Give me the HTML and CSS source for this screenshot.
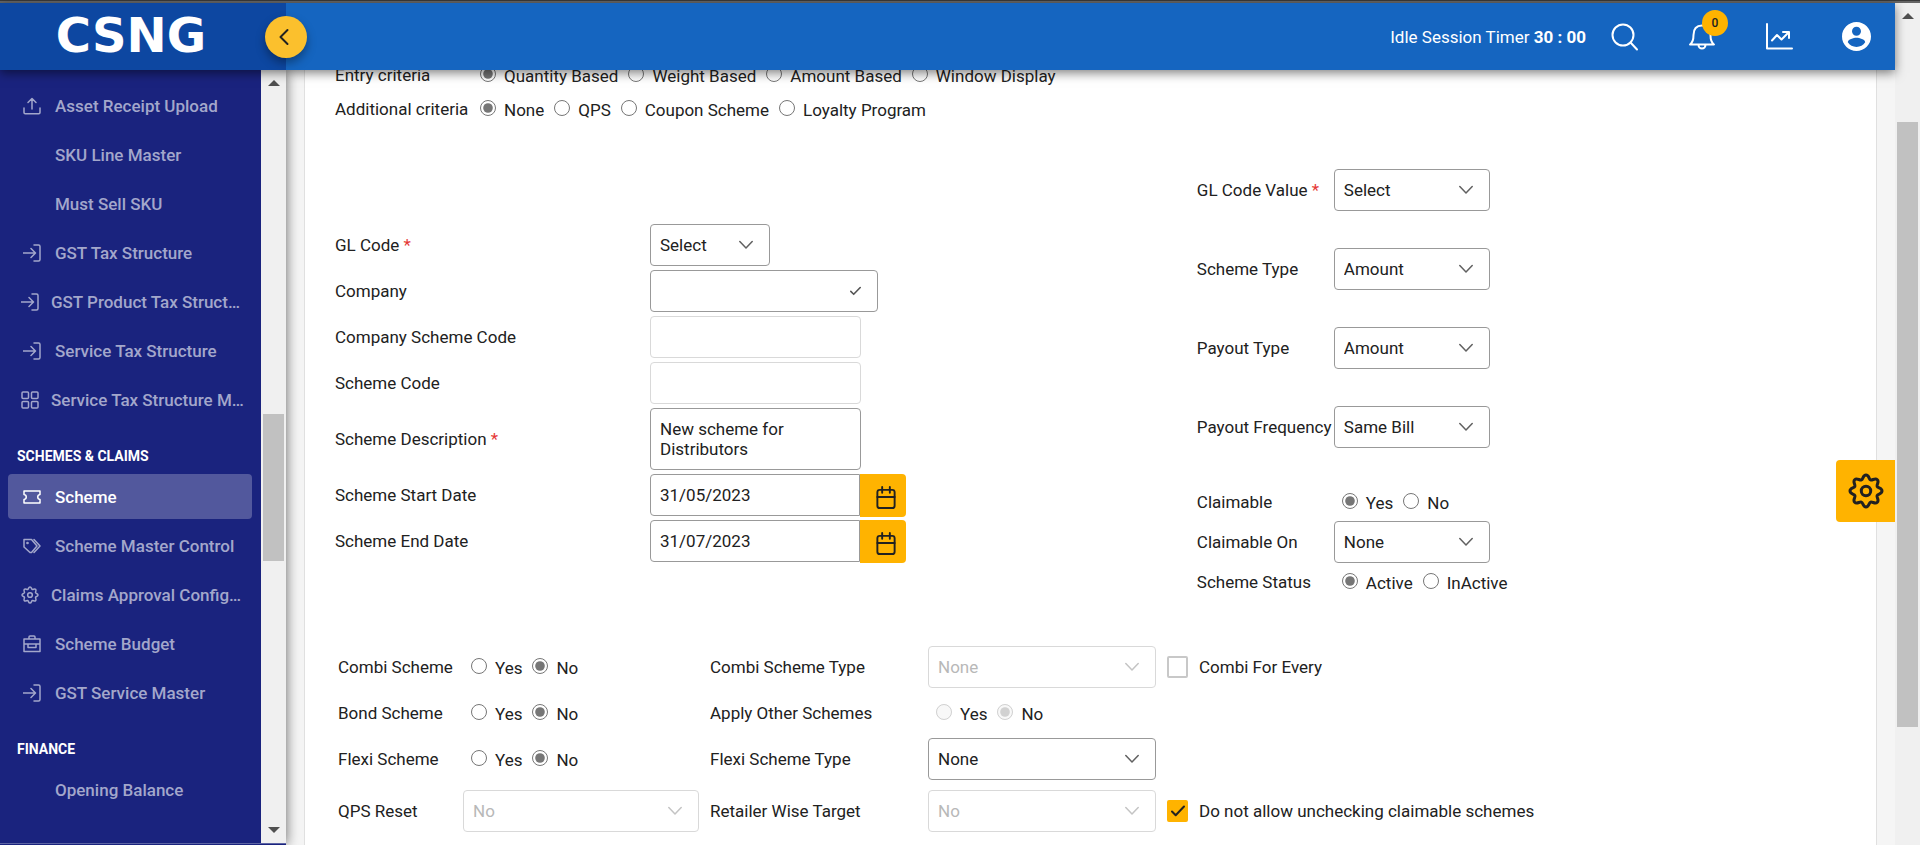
FILE: index.html
```
<!DOCTYPE html>
<html lang="en">
<head>
<meta charset="utf-8">
<title>CSNG - Scheme</title>
<link rel="stylesheet" href="styles.css">
</head>
<body>
<svg class="sprite" aria-hidden="true">
  <symbol id="i-upload" viewBox="0 0 18 18"><path d="M9 12V2M5 5.500L9 1.500l4 4M1 11v4.500a1.200 1.200 0 0 0 1.200 1.200h13.600a1.200 1.200 0 0 0 1.200-1.200V11"/></symbol>
  <symbol id="i-in" viewBox="0 0 18 18"><path d="M0 9h12M8 4.500L12.500 9 8 13.500M11 1h4.500A1.500 1.500 0 0 1 17 2.500v13a1.500 1.500 0 0 1-1.500 1.500H11"/></symbol>
  <symbol id="i-grid" viewBox="0 0 18 18"><rect x="1" y="1" width="6.500" height="6.500" rx="1"/><rect x="10.500" y="1" width="6.500" height="6.500" rx="1"/><rect x="1" y="10.500" width="6.500" height="6.500" rx="1"/><rect x="10.500" y="10.500" width="6.500" height="6.500" rx="1"/></symbol>
  <symbol id="i-ticket" viewBox="0 0 18 18"><path d="M1 3h16v3.500c-3 .5-3 4.500 0 5V15H1v-3.500c3-.5 3-4.500 0-5z"/></symbol>
  <symbol id="i-tags" viewBox="0 0 18 18"><path d="M1 2.500h7.500l5.500 6.500-5.500 6.500H7L1 10zM11 2.500l6 6.500-6 6.500"/><circle cx="4.500" cy="6" r=".6"/></symbol>
  <symbol id="i-cog" viewBox="0 0 36 36"><path d="M18 2C21.200 2 20.740 6.140 22.590 6.910S27.050 4.430 29.310 6.690 28.320 11.560 29.090 13.410 34 14.800 34 18 29.860 20.740 29.090 22.590 31.570 27.050 29.310 29.310 24.440 28.320 22.590 29.090 21.200 34 18 34 15.260 29.860 13.410 29.090 8.950 31.570 6.690 29.310 7.680 24.440 6.910 22.590 2 21.200 2 18 6.140 15.260 6.910 13.410 4.430 8.950 6.690 6.690 11.560 7.680 13.410 6.910 14.800 2 18 2z"/><circle cx="18" cy="18" r="4.700"/></symbol>
  <symbol id="i-case" viewBox="0 0 18 18"><path d="M1 4h16v12.500H1zM6 4V2q0-1 1-1h4q1 0 1 1v2M1 9h16M5 9v3.500h8V9"/></symbol>
  <symbol id="i-cal" viewBox="0 0 20 24"><rect x="1" y="4" width="18" height="19" rx="2.500"/><path d="M1 11.500h18M6 1v6M14 1v6"/></symbol>
  <symbol id="i-down" viewBox="0 0 14 10"><path d="M.8 1.500L7 8l6.200-6.500"/></symbol>
  <symbol id="i-check" viewBox="0 0 14 12"><path d="M1 6.500l3.700 3.700L13 1.500"/></symbol>
</svg>

<div class="app">
  <div class="strip"></div>
  <div class="window">
    <div class="viewport">
      <header class="topbar">
        <div class="brand"><span class="wordmark">CSNG</span></div>
        <button class="collapse" type="button" aria-label="Collapse menu"><svg width="12" height="18" viewBox="0 0 12 18"><path d="M9.500 2L2.500 9l7 7"/></svg></button>
        <div class="tools">
          <div class="timer">Idle Session Timer <b>30 : 00</b></div>
          <button class="tool" type="button" aria-label="Search"><svg width="28" height="28" viewBox="0 0 28 28"><circle cx="12" cy="12" r="10.500"/><path d="M19.500 19.500l6.500 7"/></svg></button>
          <button class="tool" type="button" aria-label="Notifications"><svg width="28" height="28" viewBox="0 0 28 28"><path d="M2 21.500c3-2 3.500-5 3.500-9.500C5.500 6 8.500 2.500 14 2.500S22.500 6 22.500 12c0 4.500.5 7.500 3.500 9.500zM10.500 22a3.500 3.500 0 0 0 7 0"/></svg><span class="badge">0</span></button>
          <button class="tool" type="button" aria-label="Reports"><svg width="28" height="28" viewBox="0 0 28 28"><path d="M2 1v24.500h25M7 17.500l5-5.500 4.500 4.500 7-7M18 9h6v6"/></svg></button>
          <button class="tool" type="button" aria-label="Account"><svg width="29" height="29" viewBox="2 2 20 20"><path class="solid" d="M12 2C6.480 2 2 6.480 2 12s4.480 10 10 10 10-4.480 10-10S17.520 2 12 2zm0 3.300c1.700 0 3.100 1.400 3.100 3.100s-1.400 3.100-3.100 3.100-3.100-1.400-3.100-3.100S10.300 5.300 12 5.300zm0 13.900c-2.500 0-4.700-1.280-6-3.220.03-1.990 4-3.080 6-3.080 1.990 0 5.970 1.090 6 3.080-1.290 1.940-3.500 3.220-6 3.220z"/></svg></button>
        </div>
      </header>

      <div class="body">
        <aside class="sidebar">
          <div class="side-main">
            <nav class="menu">
              <a class="item" href="#"><svg><use href="#i-upload"/></svg>Asset Receipt Upload</a>
              <a class="item" href="#"><svg></svg>SKU Line Master</a>
              <a class="item" href="#"><svg></svg>Must Sell SKU</a>
              <a class="item" href="#"><svg><use href="#i-in"/></svg>GST Tax Structure</a>
              <a class="item long" href="#"><svg><use href="#i-in"/></svg>GST Product Tax Struct…</a>
              <a class="item" href="#"><svg><use href="#i-in"/></svg>Service Tax Structure</a>
              <a class="item long" href="#"><svg><use href="#i-grid"/></svg>Service Tax Structure M…</a>
              <h2>SCHEMES &amp; CLAIMS</h2>
              <a class="item active" href="#"><svg><use href="#i-ticket"/></svg>Scheme</a>
              <a class="item" href="#"><svg><use href="#i-tags"/></svg>Scheme Master Control</a>
              <a class="item long cog" href="#"><svg><use href="#i-cog"/></svg>Claims Approval Config…</a>
              <a class="item" href="#"><svg><use href="#i-case"/></svg>Scheme Budget</a>
              <a class="item" href="#"><svg><use href="#i-in"/></svg>GST Service Master</a>
              <h2>FINANCE</h2>
              <a class="item" href="#"><svg></svg>Opening Balance</a>
            </nav>
            <div class="track side-track"><i class="arrow up"></i><i class="space before"></i><i class="thumb"></i><i class="space after"></i><i class="arrow dn"></i></div>
          </div>
          <div class="side-foot"></div>
        </aside>

        <main class="content">
          <form class="card">
            <div class="criteria">
              <span class="lbl">Entry criteria</span>
              <div class="radios">
                <label><input type="radio" name="entry" checked>Quantity Based</label>
                <label><input type="radio" name="entry">Weight Based</label>
                <label><input type="radio" name="entry">Amount Based</label>
                <label><input type="radio" name="entry">Window Display</label>
              </div>
              <span class="lbl">Additional criteria</span>
              <div class="radios">
                <label><input type="radio" name="addl" checked>None</label>
                <label><input type="radio" name="addl">QPS</label>
                <label><input type="radio" name="addl">Coupon Scheme</label>
                <label><input type="radio" name="addl">Loyalty Program</label>
              </div>
            </div>

            <div class="halves">
              <div class="left">
                <label for="gl">GL Code <em>*</em></label>
                <div class="field w-s"><select id="gl"><option>Select</option></select><svg class="chev"><use href="#i-down"/></svg></div>
                <label for="co">Company</label>
                <div class="field w-l"><input id="co" type="text"><svg class="tick"><use href="#i-check"/></svg></div>
                <label for="csc">Company Scheme Code</label>
                <div class="field w-m"><input id="csc" type="text" disabled></div>
                <label for="sc">Scheme Code</label>
                <div class="field w-m"><input id="sc" type="text" disabled></div>
                <label for="sd">Scheme Description <em>*</em></label>
                <div class="field w-m"><textarea id="sd">New scheme for Distributors</textarea></div>
                <label for="d1">Scheme Start Date</label>
                <div class="date"><input id="d1" type="text" value="31/05/2023"><button type="button" aria-label="Pick start date"><svg><use href="#i-cal"/></svg></button></div>
                <label for="d2">Scheme End Date</label>
                <div class="date"><input id="d2" type="text" value="31/07/2023"><button type="button" aria-label="Pick end date"><svg><use href="#i-cal"/></svg></button></div>
              </div>

              <div class="right">
                <div class="tall">
                  <label for="glv">GL Code Value <em>*</em></label>
                  <div class="field"><select id="glv"><option>Select</option></select><svg class="chev"><use href="#i-down"/></svg></div>
                  <label for="st">Scheme Type</label>
                  <div class="field"><select id="st"><option>Amount</option></select><svg class="chev"><use href="#i-down"/></svg></div>
                  <label for="pt">Payout Type</label>
                  <div class="field"><select id="pt"><option>Amount</option></select><svg class="chev"><use href="#i-down"/></svg></div>
                  <label for="pf">Payout Frequency</label>
                  <div class="field"><select id="pf"><option>Same Bill</option></select><svg class="chev"><use href="#i-down"/></svg></div>
                </div>
                <div class="short">
                  <span class="lbl">Claimable</span>
                  <div class="radios inset"><label><input type="radio" name="claim" checked>Yes</label><label><input type="radio" name="claim">No</label></div>
                  <label for="con">Claimable On</label>
                  <div class="field"><select id="con"><option>None</option></select><svg class="chev"><use href="#i-down"/></svg></div>
                  <span class="lbl">Scheme Status</span>
                  <div class="radios inset"><label><input type="radio" name="status" checked>Active</label><label><input type="radio" name="status">InActive</label></div>
                </div>
              </div>
            </div>

            <div class="options">
              <span class="lbl">Combi Scheme</span>
              <div class="radios inset"><label><input type="radio" name="combi">Yes</label><label><input type="radio" name="combi" checked>No</label></div>
              <label for="cst">Combi Scheme Type</label>
              <div class="field w-l"><select id="cst" disabled><option>None</option></select><svg class="chev"><use href="#i-down"/></svg></div>
              <label class="check"><span class="box"><input type="checkbox"><svg><use href="#i-check"/></svg></span>Combi For Every</label>

              <span class="lbl">Bond Scheme</span>
              <div class="radios inset"><label><input type="radio" name="bond">Yes</label><label><input type="radio" name="bond" checked>No</label></div>
              <span class="lbl">Apply Other Schemes</span>
              <div class="radios inset"><label><input type="radio" name="other" disabled>Yes</label><label><input type="radio" name="other" checked disabled>No</label></div>
              <span></span>

              <span class="lbl">Flexi Scheme</span>
              <div class="radios inset"><label><input type="radio" name="flexi">Yes</label><label><input type="radio" name="flexi" checked>No</label></div>
              <label for="fst">Flexi Scheme Type</label>
              <div class="field w-l"><select id="fst"><option>None</option></select><svg class="chev"><use href="#i-down"/></svg></div>
              <span></span>

              <label for="qr">QPS Reset</label>
              <div class="field w-xl"><select id="qr" disabled><option>No</option></select><svg class="chev"><use href="#i-down"/></svg></div>
              <label for="rwt">Retailer Wise Target</label>
              <div class="field w-l"><select id="rwt" disabled><option>No</option></select><svg class="chev"><use href="#i-down"/></svg></div>
              <label class="check"><span class="box"><input type="checkbox" checked><svg><use href="#i-check"/></svg></span>Do not allow unchecking claimable schemes</label>
            </div>
          </form>
        </main>
      </div>
      <button class="settings" type="button" aria-label="Settings"><svg><use href="#i-cog"/></svg></button>
    </div>
    <div class="track page-track"><i class="arrow up"></i><i class="space before"></i><i class="thumb"></i><i class="space after"></i></div>
  </div>
</div>
</body>
</html>
```
FILE: styles.css
```
* { box-sizing: border-box; }
body { margin: 0; font-family: Roboto, "Liberation Sans", sans-serif; font-size: 17px; line-height: 20px; color: #212121; }
.sprite { display: none; }
svg { flex: none; fill: none; stroke: currentColor; stroke-linecap: round; stroke-linejoin: round; }
button { font: inherit; color: inherit; border: 0; padding: 0; cursor: pointer; }

.app { display: flex; flex-direction: column; height: 100vh; overflow: hidden; }
.strip { flex: none; height: 3px; background: #666; border-top: 1px solid #3a3a3a; }
.window { flex: 1; display: flex; min-height: 0; }
.viewport { flex: 1; display: flex; flex-direction: column; min-width: 0; position: relative; }
.body { flex: 1; display: flex; min-height: 0; }

/* top bar */
.topbar { flex: none; display: flex; align-items: center; height: 67px; background: #1565c0; color: #fff; position: relative; z-index: 3; box-shadow: 0 3px 10px rgba(0, 0, 0, .5); }
.brand { width: 286px; align-self: stretch; display: flex; align-items: center; justify-content: center; padding: 0 24px 4px 0; background: #0d47a1; }
.wordmark { font-family: "DejaVu Sans", sans-serif; font-size: 48px; line-height: 48px; font-weight: 700; }
.collapse { width: 42px; height: 42px; margin-left: -21px; border-radius: 50%; background: #fbc02d; color: #212121; display: flex; align-items: center; justify-content: center; box-shadow: 0 5px 10px rgba(0, 0, 0, .35); }
.collapse svg { stroke-width: 2; margin-right: 4px; }
.tools { margin-left: auto; display: flex; align-items: center; gap: 49px; padding-right: 24px; }
.timer { font-size: 17px; margin-right: -24px; white-space: nowrap; }
.tool { display: flex; background: none; position: relative; }
.tool svg { stroke-width: 2; }
.solid { fill: #fff; stroke: none; }
.badge { position: absolute; right: -12px; top: -13px; width: 26px; height: 26px; border-radius: 50%; background: #ffb300; color: #212121; font-size: 12px; line-height: 26px; font-weight: 500; text-align: center; }

/* scrollbars */
.track { flex: none; width: 25px; background: #f0f0f0; display: flex; flex-direction: column; align-items: center; }
.arrow { border: 6px solid transparent; margin: 7px 0; }
.up { border-bottom-color: #505050; border-top-width: 0; margin: 10px 0; }
.dn { border-top-color: #505050; border-bottom-width: 0; margin: 10px 0; }
.thumb { width: 21px; background: #c1c1c1; }
.side-track .before { flex: 318; }
.side-track .thumb { flex: 147; }
.side-track .after { flex: 256; }
.page-track .before { flex: 93; }
.page-track .thumb { flex: 605; }
.page-track .after { flex: 118; }

/* sidebar */
.sidebar { flex: none; width: 286px; display: flex; flex-direction: column; background: #1a237e; position: relative; z-index: 2; box-shadow: 0 0 12px rgba(0, 0, 0, .6); }
.side-main { flex: 1; display: flex; min-height: 0; }
.side-foot { height: 2px; border-top: 1px solid #5c64a4; }
.menu { flex: 1; display: flex; flex-direction: column; min-width: 0; padding: 11px 9px 0 8px; overflow-y: auto; scrollbar-width: none; }
.menu h2 { margin: 16px 0 0 9px; font-size: 14px; line-height: 32px; font-weight: 700; color: #fff; }
.item { flex: none; display: flex; align-items: center; gap: 14px; height: 45px; margin: 2px 0; padding-left: 15px; border-radius: 4px; color: #a3a7cb; font-size: 17px; font-weight: 500; text-decoration: none; white-space: nowrap; }
.item svg { width: 18px; height: 18px; stroke-width: 1.5; }
.cog svg { stroke-width: 3; }
.long { padding-left: 13px; gap: 12px; }
.active { background: #52589d; color: #fff; }

/* form */
.content { flex: 1; min-width: 0; padding: 0 18px; background: #f5f5f5; overflow-y: auto; scrollbar-width: none; }
.card { min-height: calc(100% + 12px); margin-top: -12px; padding: 0 2px 0 30px; background: #fff; border: 1px solid #e0e0e0; border-width: 0 1px; }
em { color: #e53935; font-style: normal; }
.criteria { display: grid; grid-template-columns: 145px 1fr; grid-auto-rows: 34px; align-items: center; }
.radios { display: flex; gap: 10px; }
.radios label { display: flex; align-items: center; gap: 8px; padding-top: 2px; white-space: nowrap; }
.radios input { width: 16px; height: 16px; margin: 0 0 4px; accent-color: #767676; }
.inset { padding-left: 8px; }
.halves { display: grid; grid-template-columns: 56fr 44fr; align-items: start; margin-top: 24px; }
.left { display: grid; grid-template-columns: 315px 1fr; grid-template-rows: repeat(4, 46px) 66px repeat(2, 46px); align-items: center; padding-top: 72px; }
.tall, .short { display: grid; grid-template-columns: 137px 156px; align-items: center; white-space: nowrap; }
.tall { grid-auto-rows: 79px; }
.short { grid-auto-rows: 40px; margin-top: 16px; }
.options { display: grid; grid-template-columns: 125px 247px 218px 239px 1fr; grid-template-rows: repeat(3, 46px) 58px; align-items: center; margin-top: 42px; padding-left: 3px; }

.field { display: grid; align-items: center; }
.field > * { grid-area: 1 / 1; }
.w-s { width: 120px; }
.w-m { width: 211px; }
.w-l { width: 228px; }
.w-xl { width: 236px; }
select, input[type=text], textarea { display: block; width: 100%; height: 42px; margin: 0; padding: 0 9px; border: 1px solid #999; border-radius: 4px; background: #fff; color: #212121; font: inherit; appearance: none; opacity: 1; outline: 0; }
textarea { height: 62px; padding: 10px 9px; resize: none; overflow: hidden; }
select:disabled, input[type=text]:disabled { border-color: #d9d9d9; color: #b8b8b8; }
.chev { width: 14px; height: 10px; justify-self: end; margin-right: 17px; color: #616161; stroke-width: 1.5; pointer-events: none; }
select:disabled + .chev { color: #c4c4c4; }
.tick { width: 11px; height: 10px; justify-self: end; margin-right: 17px; color: #555; stroke-width: 2; }
.date { display: flex; align-items: center; }
.date input[type=text] { width: 210px; border-radius: 4px 0 0 4px; }
.date button { display: flex; align-items: center; justify-content: center; width: 46px; height: 43px; padding: 4px 0 0 6px; border-radius: 0 4px 4px 0; background: #ffb300; }
.date svg { width: 20px; height: 23px; stroke-width: 2; }
.check { display: flex; align-items: center; gap: 11px; white-space: nowrap; }
.box { display: grid; place-items: center; }
.box > * { grid-area: 1 / 1; }
.box input { width: 21px; height: 22px; margin: 0; appearance: none; border: 2px solid #c8c8c8; border-radius: 2px; background: #fff; }
.box svg { width: 14px; height: 12px; stroke-width: 2; visibility: hidden; pointer-events: none; }
.box input:checked { background: #ffb300; border-color: #ffb300; }
.box input:checked + svg { visibility: visible; }

.settings { position: absolute; right: 0; top: 457px; z-index: 4; display: flex; align-items: center; justify-content: center; width: 59px; height: 62px; background: #ffb300; border-radius: 4px 0 0 4px; }
.settings svg { width: 36px; height: 36px; stroke-width: 3; }
```
